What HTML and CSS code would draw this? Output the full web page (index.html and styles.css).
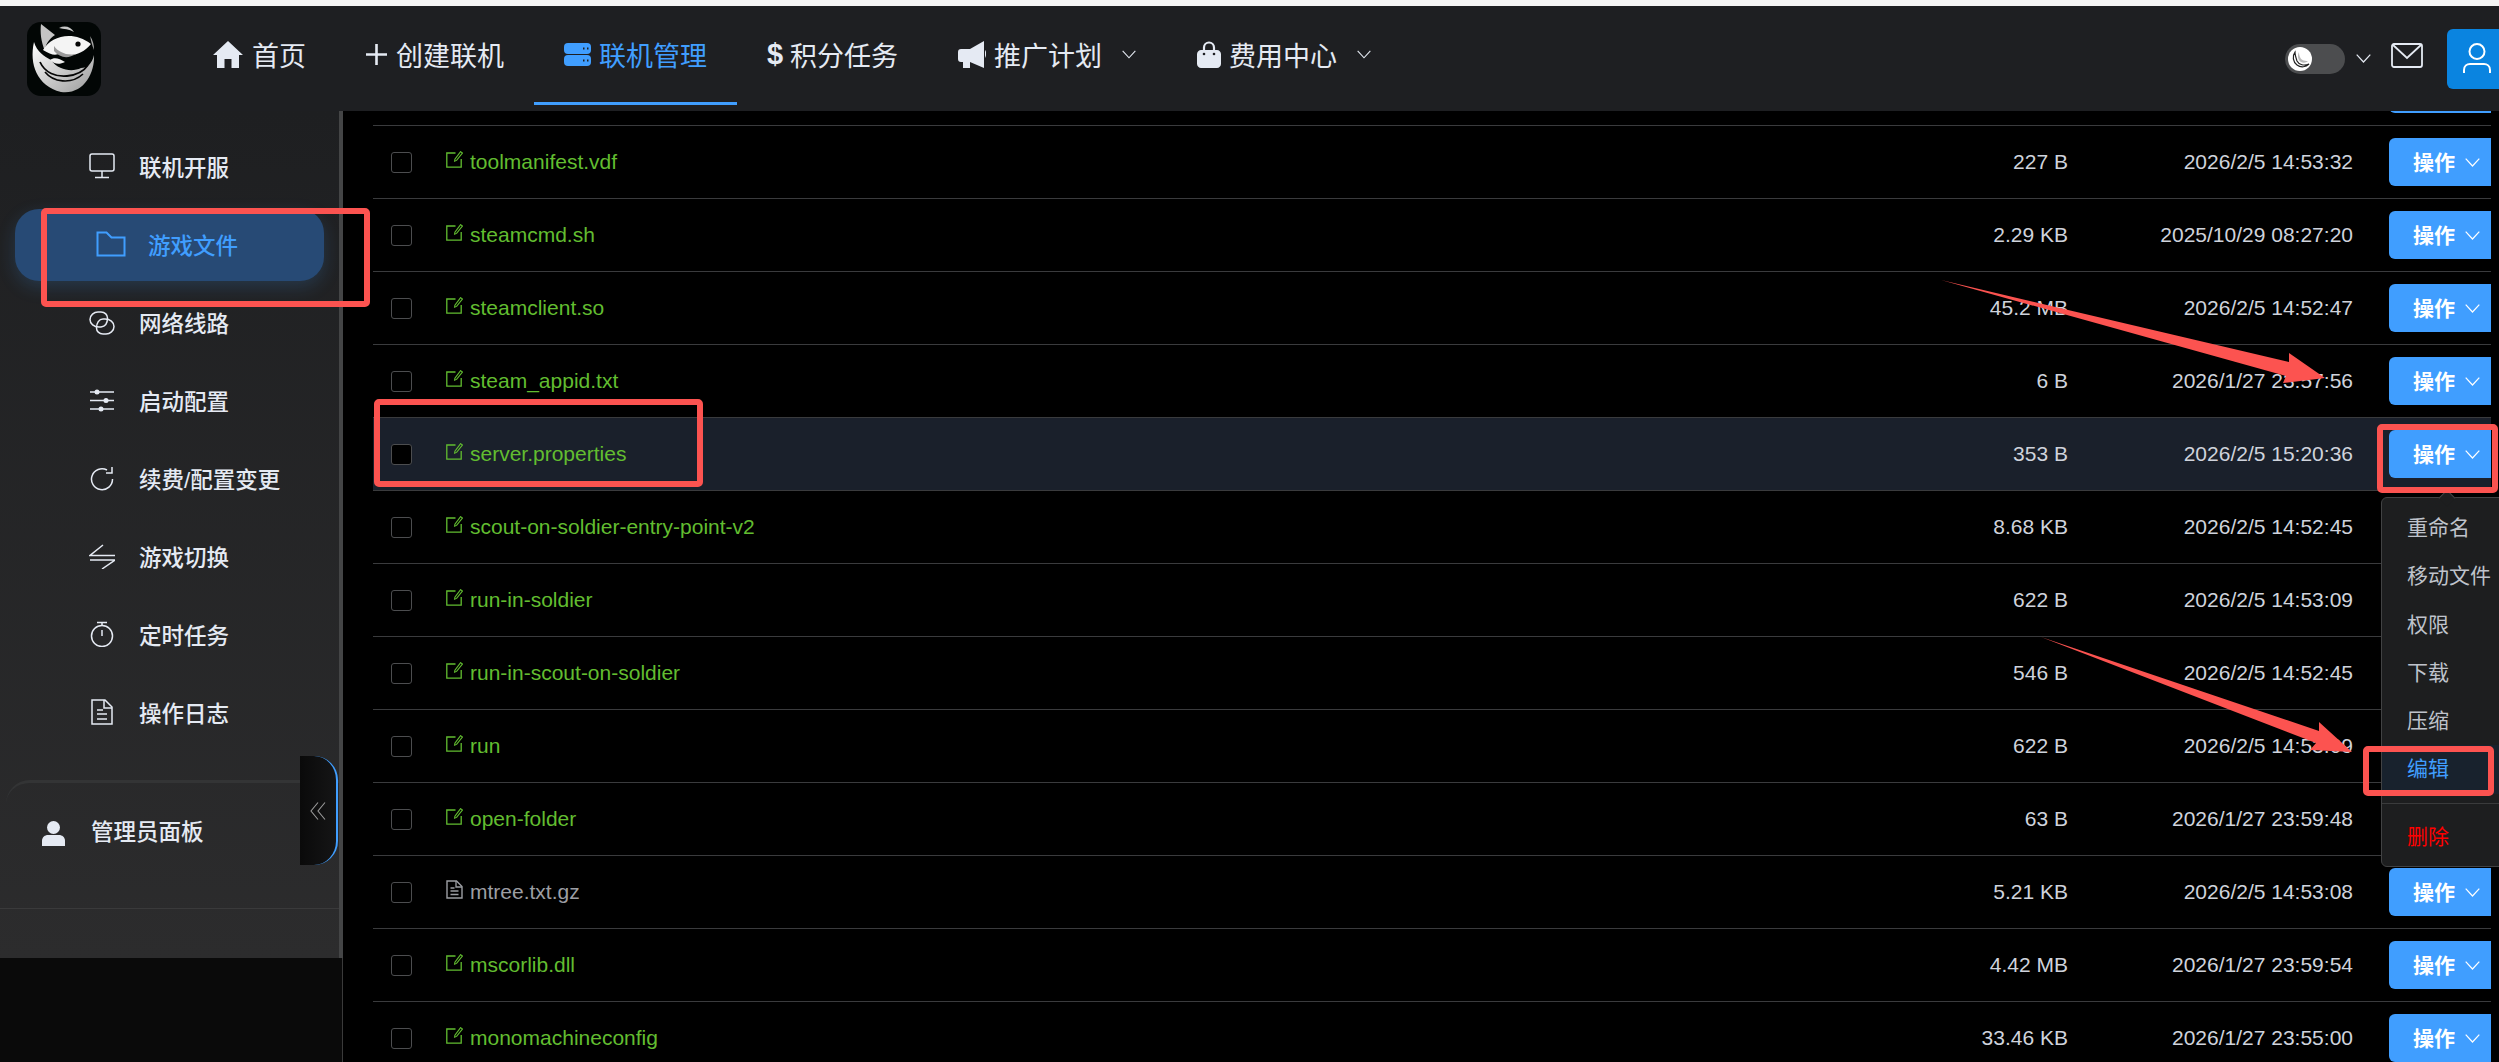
FILE: index.html
```html
<!DOCTYPE html>
<html lang="zh-CN">
<head>
<meta charset="utf-8">
<title>游戏文件</title>
<link rel="stylesheet" href="styles.css">
</head>
<body>
<svg class="defs" width="0" height="0" aria-hidden="true">
  <symbol id="chev" viewBox="0 0 15 9"><path d="M.7.7 7.500 8 14.300.7" fill="none" stroke="currentColor" stroke-width="1.200"/></symbol>
  <symbol id="edit" viewBox="0 0 17 17"><path d="M9.500 2H.8v14.200h14.400V8" fill="none" stroke="currentColor" stroke-width="1.300"/><path d="M14.600.6 16.400 2 10.600 9.400 8.600 10.200 8.900 8.100Z" fill="none" stroke="currentColor" stroke-width="1.100"/></symbol>
  <symbol id="doc" viewBox="0 0 17 19"><path d="M1 1h9.500L16 6.500V18H1Z" fill="none" stroke="currentColor" stroke-width="1.400"/><path d="M10 1v6h6M4.500 8h4M4.500 11h8M4.500 14.500h8" fill="none" stroke="currentColor" stroke-width="1.300"/></symbol>
</svg>

<div class="browser-strip"></div>

<header class="topbar">
  <div class="logo">
    <svg viewBox="0 0 74 74" width="74" height="74">
      <defs>
        <linearGradient id="lg" x1="0" y1="0" x2="1" y2="1"><stop offset="0" stop-color="#fff"/><stop offset="1" stop-color="#9a9a9a"/></linearGradient>
      </defs>
      <rect width="74" height="74" rx="14" fill="#020605"/>
      <path d="M14 2 28 13C22 17 18 23 18 29 14 20 13 10 14 2Z" fill="#c4c4c4"/>
      <path d="M16 28C24 14 46 8 64 22 56 32 43 36 33 31 29 34 24 33 16 28Z" fill="#f4f4f4"/>
      <path d="M27 24C31 30 40 34 49 32 41 37 33 36 27 29Z" fill="#9a9a9a"/>
      <circle cx="51" cy="22" r="2.600" fill="#050505"/>
      <path d="M7 20C2 42 10 64 34 70 56 73 68 52 67 33 65 42 60 46 54 46 46 50 32 49 24 38 17 34 10 30 7 20Z" fill="url(#lg)"/>
      <path d="M13 40C18 51 29 55 40 54 50 53 57 49 61 43" fill="none" stroke="#050505" stroke-width="1.800"/>
      <path d="M18 50C26 60 44 63 56 52" fill="none" stroke="#050505" stroke-width="1.600"/>
      <path d="M23 38C27 35 32 36 38 40 32 43 27 42 23 38Z" fill="#eee"/>
      <path d="M32 6C38 3 44 5 47 10 42 7 37 7 32 6Z" fill="#c8c8c8"/>
      <path d="M63 14C66 18 67 23 67 28 65 23 64 19 63 14Z" fill="#aaa"/>
    </svg>
  </div>
  <nav class="nav">
    <a class="nav-item"><svg class="nav-icon" width="30" height="27" viewBox="0 0 30 27"><path d="M15 0 30 14H26V27H18.500V18H11.500V27H4V14H0Z" fill="currentColor"/></svg><span>首页</span></a>
    <a class="nav-item"><svg class="nav-icon" width="21" height="21" viewBox="0 0 21 21"><path d="M10.500 0v21M0 10.500h21" stroke="currentColor" stroke-width="2.600"/></svg><span>创建联机</span></a>
    <a class="nav-item is-active"><svg class="nav-icon gap-8" width="27" height="23" viewBox="0 0 27 23"><rect width="27" height="11" rx="4" fill="currentColor"/><rect y="12" width="27" height="11" rx="4" fill="currentColor"/><path d="M19 5.500h1.500M23 5.500h1.500M19 17.500h1.500M23 17.500h1.500" stroke="#1e1f22" stroke-width="2"/></svg><span>联机管理</span></a>
    <a class="nav-item"><span class="dollar">$</span><span>积分任务</span></a>
    <a class="nav-item has-sub"><svg class="nav-icon gap-8" width="28" height="27" viewBox="0 0 28 27"><path d="M26 0 12 8H3C1 8 0 9 0 11v7c0 2 1 3 3 3h2v6h7v-6l14 6V0ZM27 9c1.500 1 1.500 6 0 8Z" fill="currentColor"/></svg><span>推广计划</span><svg class="sub-chev" width="14" height="9"><use href="#chev"/></svg></a>
    <a class="nav-item has-sub"><svg class="nav-icon gap-8" width="24" height="27" viewBox="0 0 24 27"><path d="M7 12V6.500a5 5 0 0 1 10 0V12" fill="none" stroke="currentColor" stroke-width="2.200"/><path d="M4 9h16c2 0 4 2 4 4v10c0 2-2 4-4 4H4c-2 0-4-2-4-4V13c0-2 2-4 4-4Z" fill="currentColor"/><circle cx="7" cy="13" r="1.300" fill="#1e1f22"/><circle cx="17" cy="13" r="1.300" fill="#1e1f22"/></svg><span>费用中心</span><svg class="sub-chev" width="14" height="9"><use href="#chev"/></svg></a>
  </nav>
  <div class="top-tools">
    <div class="theme-toggle"><span class="knob"><svg width="24" height="24" viewBox="0 0 24 24"><circle cx="12" cy="12" r="12" fill="#fff"/><path d="M7 5C4 9 5 15 9 18c4 3 9 2 12-1-5 2-10 1-12-3C8 11 7 8 7 5Z" fill="none" stroke="#222" stroke-width="1.200"/><path d="M11 5C9 9 10 13 13 15c2 1 5 1 7-1-4 0-7-1-8-4-.7-2-1-3-1-5Z" fill="#bbb"/></svg></span></div>
    <svg class="toggle-chev" width="15" height="9"><use href="#chev"/></svg>
    <svg class="mail" width="32" height="25" viewBox="0 0 32 25"><rect x="1" y="1" width="30" height="23" rx="2" fill="none" stroke="currentColor" stroke-width="1.800"/><path d="M1.500 1.500 16 15 30.500 1.500" fill="none" stroke="currentColor" stroke-width="1.800"/></svg>
    <div class="avatar"><svg width="28" height="30" viewBox="0 0 28 30"><circle cx="14" cy="8.500" r="7.500" fill="none" stroke="#fff" stroke-width="2"/><path d="M1 30v-3c0-4 3-6 6-6h14c3 0 6 2 6 6v3" fill="none" stroke="#fff" stroke-width="2"/></svg></div>
  </div>
</header>

<div class="layout">
  <aside class="side">
    <div class="side-panel">
      <ul class="menu">
        <li class="menu-item"><svg class="m-icon" viewBox="0 0 26 26"><rect x="1" y="1" width="24" height="17" rx="2"/><path d="M13 18v6M6 24.500h14"/></svg><span>联机开服</span></li>
        <li class="menu-item is-active"><svg class="m-icon folder" viewBox="0 0 30 26"><path d="M1.500 1.500h9l5 5h13v18h-27Z"/></svg><span>游戏文件</span></li>
        <li class="menu-item"><svg class="m-icon" viewBox="0 0 26 26"><path d="M10 18C5 18 1 15 1 10.500 1 6 5 3 9 3h3c4 0 6.500 3 6.500 6 0 5-2.500 8.500-6.500 9h-2"/><path d="M16 10c5 0 9 3 9 7.500S21 25 17 25h-3c-4 0-6.500-3-6.500-6 0-5 2.500-9 6.500-9h2"/></svg><span>网络线路</span></li>
        <li class="menu-item"><svg class="m-icon" viewBox="0 0 26 26"><path d="M1 5h24M1 13.500h24M1 22h24"/><circle class="dot" cx="8" cy="5" r="2.500"/><circle class="dot" cx="17" cy="13.500" r="2.500"/><circle class="dot" cx="12" cy="22" r="2.500"/></svg><span>启动配置</span></li>
        <li class="menu-item"><svg class="m-icon" viewBox="0 0 26 26"><path d="M18 5a10.500 10.500 0 1 0 5.500 9"/><path d="M23 2v6h-6"/></svg><span>续费/配置变更</span></li>
        <li class="menu-item"><svg class="m-icon" viewBox="0 0 26 26"><path d="M14 2 1 12.500h25M1 17h25L13 26"/></svg><span>游戏切换</span></li>
        <li class="menu-item"><svg class="m-icon" viewBox="0 0 26 26"><circle cx="13" cy="15" r="10.500"/><path d="M8 1.500h10M13 2v3M13 9v6"/></svg><span>定时任务</span></li>
        <li class="menu-item"><svg class="m-icon" viewBox="0 0 26 26"><path d="M3 1h13l7 7v17H3Z"/><path d="M15 1v8h8M8 11h6M8 15h10M8 20h10"/></svg><span>操作日志</span></li>
      </ul>
      <div class="admin-wrap">
        <div class="admin-card">
          <svg width="23" height="25" viewBox="0 0 23 25"><circle cx="11.500" cy="6.500" r="6.500" fill="currentColor"/><path d="M0 25v-5c0-4 3-6 6-6h11c3 0 6 2 6 6v5Z" fill="currentColor"/></svg>
          <span>管理员面板</span>
        </div>
      </div>
      <div class="collapse-handle"><svg width="16" height="18" viewBox="0 0 16 18"><path d="M8 .500 1 9l7 8.500M15 .500 8 9l7 8.500" fill="none" stroke="#9a9a9a" stroke-width="1.100"/></svg></div>
    </div>
    <div class="side-foot"></div>
  </aside>

  <main class="files">
    <div class="file-row clipped-first"><span></span><span></span><span></span><span></span><span class="action"><span class="op-btn"></span></span></div>
    <div class="file-row"><span class="check"></span><span class="name"><svg width="17" height="17"><use href="#edit"/></svg>toolmanifest.vdf</span><span class="size">227 B</span><span class="time">2026/2/5 14:53:32</span><span class="action"><button class="op-btn">操作<svg width="15" height="9"><use href="#chev"/></svg></button></span></div>
    <div class="file-row"><span class="check"></span><span class="name"><svg width="17" height="17"><use href="#edit"/></svg>steamcmd.sh</span><span class="size">2.29 KB</span><span class="time">2025/10/29 08:27:20</span><span class="action"><button class="op-btn">操作<svg width="15" height="9"><use href="#chev"/></svg></button></span></div>
    <div class="file-row"><span class="check"></span><span class="name"><svg width="17" height="17"><use href="#edit"/></svg>steamclient.so</span><span class="size">45.2 MB</span><span class="time">2026/2/5 14:52:47</span><span class="action"><button class="op-btn">操作<svg width="15" height="9"><use href="#chev"/></svg></button></span></div>
    <div class="file-row"><span class="check"></span><span class="name"><svg width="17" height="17"><use href="#edit"/></svg>steam_appid.txt</span><span class="size">6 B</span><span class="time">2026/1/27 23:57:56</span><span class="action"><button class="op-btn">操作<svg width="15" height="9"><use href="#chev"/></svg></button></span></div>
    <div class="file-row is-hover"><span class="check"></span><span class="name"><svg width="17" height="17"><use href="#edit"/></svg>server.properties</span><span class="size">353 B</span><span class="time">2026/2/5 15:20:36</span><span class="action"><button class="op-btn">操作<svg width="15" height="9"><use href="#chev"/></svg></button></span></div>
    <div class="file-row"><span class="check"></span><span class="name"><svg width="17" height="17"><use href="#edit"/></svg>scout-on-soldier-entry-point-v2</span><span class="size">8.68 KB</span><span class="time">2026/2/5 14:52:45</span><span class="action"></span></div>
    <div class="file-row"><span class="check"></span><span class="name"><svg width="17" height="17"><use href="#edit"/></svg>run-in-soldier</span><span class="size">622 B</span><span class="time">2026/2/5 14:53:09</span><span class="action"></span></div>
    <div class="file-row"><span class="check"></span><span class="name"><svg width="17" height="17"><use href="#edit"/></svg>run-in-scout-on-soldier</span><span class="size">546 B</span><span class="time">2026/2/5 14:52:45</span><span class="action"></span></div>
    <div class="file-row"><span class="check"></span><span class="name"><svg width="17" height="17"><use href="#edit"/></svg>run</span><span class="size">622 B</span><span class="time">2026/2/5 14:53:09</span><span class="action"></span></div>
    <div class="file-row"><span class="check"></span><span class="name"><svg width="17" height="17"><use href="#edit"/></svg>open-folder</span><span class="size">63 B</span><span class="time">2026/1/27 23:59:48</span><span class="action"></span></div>
    <div class="file-row"><span class="check"></span><span class="name is-plain"><svg width="17" height="19"><use href="#doc"/></svg>mtree.txt.gz</span><span class="size">5.21 KB</span><span class="time">2026/2/5 14:53:08</span><span class="action"><button class="op-btn">操作<svg width="15" height="9"><use href="#chev"/></svg></button></span></div>
    <div class="file-row"><span class="check"></span><span class="name"><svg width="17" height="17"><use href="#edit"/></svg>mscorlib.dll</span><span class="size">4.42 MB</span><span class="time">2026/1/27 23:59:54</span><span class="action"><button class="op-btn">操作<svg width="15" height="9"><use href="#chev"/></svg></button></span></div>
    <div class="file-row"><span class="check"></span><span class="name"><svg width="17" height="17"><use href="#edit"/></svg>monomachineconfig</span><span class="size">33.46 KB</span><span class="time">2026/1/27 23:55:00</span><span class="action"><button class="op-btn">操作<svg width="15" height="9"><use href="#chev"/></svg></button></span></div>
  </main>
</div>

<div class="dropdown">
  <ul class="drop-list">
    <li>重命名</li>
    <li>移动文件</li>
    <li>权限</li>
    <li>下载</li>
    <li>压缩</li>
    <li class="is-focus">编辑</li>
    <li class="is-danger">删除</li>
  </ul>
</div>

<svg class="marks" width="2499" height="1062" viewBox="0 0 2499 1062" aria-hidden="true">
  <rect x="44" y="211" width="323" height="93" rx="2"/>
  <rect x="377" y="402" width="323" height="82" rx="2"/>
  <rect x="2380" y="427" width="115" height="63" rx="2"/>
  <rect x="2366" y="749" width="125" height="44" rx="2"/>
  <polygon points="1941,280 2289,362 2289,353 2325,378 2283,383 2286,376"/>
  <polygon points="2041,637 2319,731 2319,722 2352,752 2310,750 2316,743"/>
</svg>
</body>
</html>
```

FILE: styles.css
```css
* { box-sizing: border-box; }
html, body { margin: 0; padding: 0; }
body {
  position: relative;
  width: 2499px;
  height: 1062px;
  overflow: hidden;
  background: #000;
  color: #cfd3dc;
  font-family: "Liberation Sans", "Noto Sans CJK SC", sans-serif;
  font-size: 21px;
  display: flex;
  flex-direction: column;
}
.defs { position: absolute; }
.browser-strip { height: 6px; background: #f5f5f5; flex: none; }

.topbar {
  flex: none;
  height: 105px;
  background: #1e1f22;
  display: flex;
  align-items: center;
  padding-left: 27px;
  color: #e5eaf3;
  position: relative;
  z-index: 3;
}
.logo { width: 74px; height: 74px; flex: none; margin-right: 82px; }
.logo svg { display: block; }
.nav { display: flex; align-self: flex-start; height: 99px; }
.nav-item {
  display: flex;
  align-items: center;
  padding: 0 30px;
  font-size: 27px;
  border-bottom: 3px solid transparent;
  white-space: nowrap;
}
.nav-item.is-active { color: #409eff; border-bottom-color: #409eff; }
.nav-icon { margin-right: 9px; flex: none; }
.nav-icon.gap-8 { margin-right: 8px; }
.dollar { width: 15px; margin-right: 8px; font-weight: 700; font-size: 29px; }
.nav-item.has-sub { padding-right: 31px; }
.sub-chev { margin-left: 20px; flex: none; }

.top-tools { margin-left: auto; display: flex; align-items: center; }
.theme-toggle { width: 60px; height: 30px; border-radius: 15px; background: #4c4d4f; padding: 3px; }
.knob { display: block; width: 24px; height: 24px; }
.knob svg { display: block; }
.toggle-chev { margin: 0 20px 0 11px; }
.mail { margin: 0 24px 7px 0; }
.avatar {
  width: 52px;
  height: 60px;
  background: #0a84e0;
  border-radius: 6px 0 0 6px;
  padding: 14px 0 0 16px;
}
.avatar svg { display: block; }

.layout { flex: 1; display: flex; min-height: 0; }
.side { width: 343px; flex: none; display: flex; flex-direction: column; }
.side-panel {
  position: relative;
  height: 847px;
  background: linear-gradient(#1e1f21, #2c2c2d);
  border-right: 4px solid #444546;
}
.side-foot { flex: 1; background: #0a0a0a; border-right: 1px solid #3a3a3a; }
.menu { list-style: none; margin: 0; padding: 20px 0 0 15px; }
.menu-item {
  width: 309px;
  height: 72px;
  margin-bottom: 6px;
  display: flex;
  align-items: center;
  padding-left: 74px;
  padding-bottom: 2px;
  font-size: 22.5px;
  font-weight: 500;
  color: #e5eaf3;
  white-space: nowrap;
}
.m-icon {
  width: 26px;
  height: 26px;
  margin-right: 24px;
  flex: none;
  fill: none;
  stroke: currentColor;
  stroke-width: 1.5;
}
.m-icon .dot { fill: currentColor; stroke: none; }
.menu-item.is-active {
  background: #274a75;
  border-radius: 24px;
  color: #409eff;
  padding-left: 81px;
  box-shadow: 0 6px 18px rgba(64, 158, 255, .18);
}
.m-icon.folder { width: 30px; margin-right: 22px; stroke-width: 2; }

.admin-wrap {
  height: 129px;
  margin-top: 31px;
  border-bottom: 1px solid #3a3a3b;
}
.admin-card {
  margin-left: 6px;
  height: 128px;
  border-top: 3px solid #333435;
  border-top-left-radius: 24px;
  padding: 25px 0 0 36px;
  display: flex;
  align-items: flex-start;
  color: #e5eaf3;
  font-size: 22.5px;
  font-weight: 500;
  line-height: 50px;
}
.admin-card svg { margin: 13px 26px 0 0; flex: none; }
.collapse-handle {
  position: absolute;
  left: 300px;
  top: 645px;
  width: 38px;
  height: 109px;
  background: linear-gradient(90deg, #0a0a0a, #151516);
  border-radius: 0 24px 24px 0;
  border-right: 2px solid #409eff;
  display: flex;
  align-items: center;
  justify-content: center;
}

.files { flex: 1; min-width: 0; padding: 0 8px 0 30px; overflow: hidden; background: #000; }
.file-row {
  height: 73px;
  display: grid;
  grid-template-columns: 73px 1fr 200px 285px 138px;
  align-items: center;
  border-bottom: 1px solid #3a3b3d;
  flex: none;
}
.clipped-first { margin-top: -58px; }
.file-row.is-hover { background: #1a202b; }
.check {
  width: 21px;
  height: 21px;
  margin-left: 18px;
  border: 1px solid #4c4d4f;
  border-radius: 3px;
  background: #000;
}
.name { color: #62bd30; display: flex; align-items: center; white-space: nowrap; }
.name svg { margin: -6px 7px 0 0; flex: none; }
.name.is-plain { color: #9c9ea3; }
.size, .time { text-align: right; color: #cfd3dc; white-space: nowrap; }
.action { display: flex; justify-content: flex-end; }
.op-btn {
  width: 102px;
  height: 48px;
  border: 0;
  padding: 0 0 2px 24px;
  border-radius: 6px 0 0 6px;
  background: #409eff;
  color: #fff;
  font: 700 21px "Liberation Sans", "Noto Sans CJK SC", sans-serif;
  display: flex;
  align-items: center;
}
.op-btn svg { margin: 2px 0 0 10px; }

.dropdown {
  position: absolute;
  left: 2381px;
  top: 497px;
  width: 140px;
  height: 370px;
  background: #1d1e1f;
  border: 1px solid #414243;
  border-radius: 6px;
  z-index: 4;
}
.dropdown::before {
  content: "";
  position: absolute;
  left: 59px;
  top: -6px;
  width: 11px;
  height: 11px;
  background: #1d1e1f;
  border: 1px solid #414243;
  border-right: 0;
  border-bottom: 0;
  transform: rotate(45deg);
}
.drop-list { list-style: none; margin: 0; padding: 6px 0 0; }
.drop-list li {
  height: 48.3px;
  line-height: 48.3px;
  padding-left: 25px;
  color: #bfc3cb;
  white-space: nowrap;
}
.drop-list li.is-focus { background: #18222d; color: #409eff; }
.drop-list li.is-danger { color: #f00; border-top: 1px solid #3a3b3c; margin-top: 9px; height: 65px; line-height: 65px; }

.marks { position: absolute; left: 0; top: 0; z-index: 5; pointer-events: none; }
.marks rect { fill: none; stroke: #fc5350; stroke-width: 6; }
.marks polygon { fill: #fc5350; }
```
